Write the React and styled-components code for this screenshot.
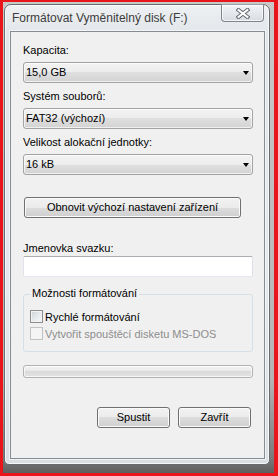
import React from 'react';
import styled, { createGlobalStyle } from 'styled-components';

const GlobalStyle = createGlobalStyle`
  html, body {
    margin: 0;
    padding: 0;
    background: #e8151a;
  }
  body {
    font-family: "Segoe UI", "Liberation Sans", Arial, sans-serif;
    font-size: 11px;
    color: #000;
  }
`;

const Screen = styled.div`
  box-sizing: border-box;
  width: 278px;
  height: 476px;
  border: solid #e8151a;
  border-width: 2px 4px 3px 3px;
  padding: 2px 4px 8px 1px;
  background: linear-gradient(to bottom, #c9c9c9 0%, #b5b5b5 80%, #7a7a7a 97%, #5e5e5e 100%);
`;

const Window = styled.div`
  box-sizing: border-box;
  height: 100%;
  display: flex;
  flex-direction: column;
  border: 1px solid #686d72;
  border-radius: 7px 7px 5px 5px;
  background: linear-gradient(to bottom, #eef0f2 0%, #e2e6ea 30px, #e6e9ec 60%, #dcdfe2 100%);
  box-shadow: inset 0 0 0 1px rgba(255, 255, 255, 0.75);
  padding: 0 4px 5px 5px;
`;

const TitleBar = styled.div`
  height: 26px;
  flex-shrink: 0;
  display: flex;
  justify-content: space-between;
  align-items: flex-start;
  padding-left: 2px;
`;

const Title = styled.div`
  padding-top: 5px;
  font-size: 12px;
  line-height: 16px;
  color: #3c3c3c;
`;

const CloseButton = styled.div`
  box-sizing: border-box;
  width: 43px;
  height: 18px;
  margin: -1px 1px 0 0;
  border: 1px solid #7f858b;
  border-top-color: #9aa0a6;
  border-radius: 0 0 4px 4px;
  background: linear-gradient(to bottom, #f2f4f6, #e3e7eb 55%, #d9dde2);
  box-shadow: inset 0 0 0 1px rgba(255, 255, 255, 0.7);
  display: flex;
  align-items: center;
  justify-content: center;
`;

const Client = styled.div`
  flex: 1;
  display: flex;
  flex-direction: column;
  border: 1px solid #878c92;
  background: #f0f0f0;
  box-shadow: 0 0 0 1px rgba(255, 255, 255, 0.6);
  padding: 11px 11px 0 12px;
`;

const Field = styled.div`
  display: flex;
  flex-direction: column;
  margin-top: ${p => p.$gap || 0}px;
`;

const Label = styled.div`
  line-height: 15px;
  height: 15px;
  margin-bottom: ${p => p.$after ?? 4}px;
  color: ${p => (p.$disabled ? '#8d8d8d' : '#000')};
`;

const Select = styled.div`
  box-sizing: border-box;
  height: 21px;
  border: 1px solid #a3a3a3;
  border-radius: 3px;
  background: linear-gradient(to bottom, #f3f3f3 0%, #ececec 50%, #dfdfdf 50%, #d3d3d3 100%);
  box-shadow: inset 0 0 0 1px rgba(255, 255, 255, 0.65);
  display: flex;
  align-items: center;
  justify-content: space-between;
  padding: 0 3px 0 2px;
  line-height: 15px;
`;

const Arrow = styled.span`
  width: 0;
  height: 0;
  border-left: 3.5px solid transparent;
  border-right: 3.5px solid transparent;
  border-top: 4px solid #000;
  margin-right: 0;
`;

const PushButton = styled.div`
  box-sizing: border-box;
  width: ${p => p.$w}px;
  height: 21px;
  border: 1px solid #707070;
  border-radius: 3px;
  background: linear-gradient(to bottom, #f2f2f2 0%, #ebebeb 50%, #dddddd 50%, #cfcfcf 100%);
  box-shadow: inset 0 0 0 1px #fbfbfb;
  display: flex;
  align-items: center;
  justify-content: center;
  line-height: 15px;
  color: #000;
`;

const ResetRow = styled.div`
  margin: 22px 0 0 1px;
`;

const TextBox = styled.div`
  box-sizing: border-box;
  height: 21px;
  border: 1px solid;
  border-color: #abadb3 #dbdfe6 #e3e9ef #e2e3ea;
  border-radius: 2px;
  background: #fff;
`;

const Group = styled.fieldset`
  margin: 10px 0 0 0;
  padding: 6px 6px 9px 6px;
  min-width: 0;
  border: 1px solid #d5dfe5;
  border-radius: 3px;
`;

const Legend = styled.legend`
  padding: 0 2px;
  line-height: 15px;
  position: relative;
  top: -1px;
`;

const CheckRow = styled.div`
  height: 17px;
  display: flex;
  align-items: center;
  color: ${p => (p.$disabled ? '#8d8d8d' : '#000')};
`;

const CheckBox = styled.span`
  box-sizing: border-box;
  width: 13px;
  height: 13px;
  flex-shrink: 0;
  margin-right: 2px;
  border: 1px solid ${p => (p.$disabled ? '#c2c2c2' : '#8e8f8f')};
  background: ${p =>
    p.$disabled
      ? '#f4f4f4'
      : 'linear-gradient(135deg, #cdd1d6 0%, #e6e8ea 50%, #f7f7f7 100%)'};
  box-shadow: inset 0 0 0 1px ${p => (p.$disabled ? '#f4f4f4' : '#f2f2f2')};
`;

const Progress = styled.div`
  box-sizing: border-box;
  height: 13px;
  margin-top: 13px;
  border: 1px solid #b2b2b2;
  border-radius: 3px;
  background: linear-gradient(to bottom, #f3f3f3 0%, #e9e9e9 50%, #dadada 50%, #e4e4e4 100%);
  box-shadow: inset 0 0 0 1px rgba(255, 255, 255, 0.7);
`;

const ButtonRow = styled.div`
  display: flex;
  justify-content: flex-end;
  gap: 8px;
  margin-top: 29px;
  padding-right: 2px;
`;

const CloseGlyph = () => (
  <svg width="14" height="11" viewBox="0 0 14 11">
    <g strokeLinecap="square">
      <line x1="2.5" y1="2" x2="11.5" y2="9" stroke="#5d6167" strokeWidth="4" />
      <line x1="11.5" y1="2" x2="2.5" y2="9" stroke="#5d6167" strokeWidth="4" />
      <line x1="2.5" y1="2" x2="11.5" y2="9" stroke="#fff" strokeWidth="2" />
      <line x1="11.5" y1="2" x2="2.5" y2="9" stroke="#fff" strokeWidth="2" />
    </g>
  </svg>
);

const fields = [
  { label: 'Kapacita:', value: '15,0 GB' },
  { label: 'Systém souborů:', value: 'FAT32 (výchozí)' },
  { label: 'Velikost alokační jednotky:', value: '16 kB' },
];

export default function App() {
  return (
    <>
      <GlobalStyle />
      <Screen>
        <Window>
          <TitleBar>
            <Title>Formátovat Vyměnitelný disk (F:)</Title>
            <CloseButton>
              <CloseGlyph />
            </CloseButton>
          </TitleBar>
          <Client>
            {fields.map((f, i) => (
              <Field key={f.label} $gap={i ? 6 : 0}>
                <Label>{f.label}</Label>
                <Select>
                  <span>{f.value}</span>
                  <Arrow />
                </Select>
              </Field>
            ))}
            <ResetRow>
              <PushButton $w={217}>Obnovit výchozí nastavení zařízení</PushButton>
            </ResetRow>
            <Field $gap={23}>
              <Label $after={0}>Jmenovka svazku:</Label>
              <TextBox />
            </Field>
            <Group>
              <Legend>Možnosti formátování</Legend>
              <CheckRow>
                <CheckBox />
                Rychlé formátování
              </CheckRow>
              <CheckRow $disabled>
                <CheckBox $disabled />
                Vytvořit spouštěcí disketu MS-DOS
              </CheckRow>
            </Group>
            <Progress />
            <ButtonRow>
              <PushButton $w={73}>Spustit</PushButton>
              <PushButton $w={73}>Zavřít</PushButton>
            </ButtonRow>
          </Client>
        </Window>
      </Screen>
    </>
  );
}
